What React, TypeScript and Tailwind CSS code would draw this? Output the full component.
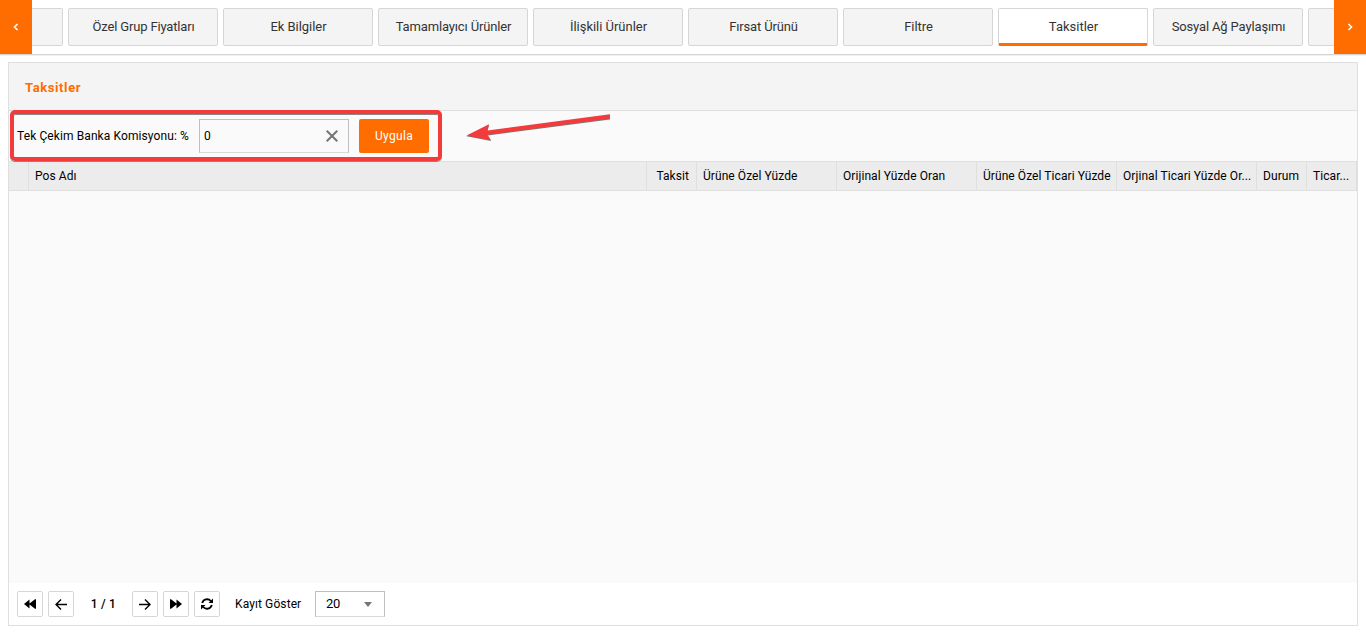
import type { ReactNode } from "react";

const tabs = [
  { label: "Özel Grup Fiyatları", spacing: "tracking-[-0.16px]" },
  { label: "Ek Bilgiler", spacing: "tracking-[-0.05px]" },
  { label: "Tamamlayıcı Ürünler", spacing: "tracking-[-0.14px]" },
  { label: "İlişkili Ürünler", spacing: "tracking-[-0.03px]" },
  { label: "Fırsat Ürünü", spacing: "tracking-[-0.15px]" },
  { label: "Filtre", spacing: "tracking-[-0.05px]" },
  { label: "Taksitler", active: true, spacing: "tracking-[0px]" },
  { label: "Sosyal Ağ Paylaşımı", spacing: "tracking-[-0.14px]" },
];

const columns = [
  { label: "", width: "w-5" },
  { label: "Pos Adı", width: "w-[618px]" },
  { label: "Taksit", width: "w-[50px]", align: "text-right pr-[7px]" },
  { label: "Ürüne Özel Yüzde", width: "w-[140px]" },
  { label: "Orijinal Yüzde Oran", width: "w-[140px]" },
  { label: "Ürüne Özel Ticari Yüzde", width: "w-[140px]" },
  { label: "Orjinal Ticari Yüzde Or...", width: "w-[140px]" },
  { label: "Durum", width: "w-[50px]" },
  { label: "Ticar...", width: "w-[50px]" },
];

function Tab({ label, active, spacing }: { label: string; active?: boolean; spacing: string }) {
  return (
    <button
      className={`h-[38px] w-[150px] shrink-0 rounded-[2px] border border-[#d6d6d6] pl-px text-[13px] text-[#333] ${spacing} ${
        active ? "border-b-[3px] border-b-[#ff6c00] bg-white pt-0.5" : "bg-[#f4f4f4]"
      }`}
    >
      {label}
    </button>
  );
}

function PageButton({ children, label }: { children: ReactNode; label: string }) {
  return (
    <button aria-label={label} className="flex size-[26px] items-center justify-center rounded-[2px] border border-[#d6d6d6] bg-white">
      {children}
    </button>
  );
}

function Chevron({ flip }: { flip?: boolean }) {
  return (
    <svg width="6" height="8" viewBox="0 0 6 8" className={flip ? "-scale-x-100" : ""}>
      <path d="M4.5 1 1.5 4l3 3" fill="none" stroke="white" strokeWidth="1.6" />
    </svg>
  );
}

function DoubleTriangle({ flip }: { flip?: boolean }) {
  return (
    <svg width="12" height="10" viewBox="0 0 12 10" className={flip ? "-scale-x-100" : ""}>
      <path d="M0 5 5.5 0.5V4.5L11 0.3H12V9.7H11L5.5 5.5V9.5Z" />
    </svg>
  );
}

function Arrow({ flip }: { flip?: boolean }) {
  return (
    <svg width="12" height="11" viewBox="0 0 12 11" className={flip ? "-scale-x-100" : ""}>
      <path d="M6 .5 1 5.500l5 5M1 5.500H12" fill="none" stroke="black" strokeWidth="1.400" />
    </svg>
  );
}

export default function App() {
  return (
    <div className="relative flex h-[634px] w-[1366px] flex-col overflow-hidden bg-white font-[Roboto,sans-serif] text-[12px] text-black">
      <nav className="flex h-[55px] shrink-0 border-b border-[#d4d4d4] shadow-[0_1px_0_#f2f2f2]">
        <button aria-label="Önceki" className="flex h-[54px] w-8 shrink-0 items-center justify-center bg-[#ff6c00]">
          <Chevron />
        </button>
        <div className="flex min-w-0 flex-1 gap-[5px] overflow-hidden pt-2">
          <div className="h-[38px] w-[31px] shrink-0 rounded-r-[2px] border border-l-0 border-[#d6d6d6] bg-[#f4f4f4]" />
          {tabs.map((tab) => (
            <Tab key={tab.label} {...tab} />
          ))}
          <div className="h-[38px] w-[150px] shrink-0 rounded-[2px] border border-[#d6d6d6] bg-[#f4f4f4]" />
        </div>
        <button aria-label="Sonraki" className="flex h-[54px] w-8 shrink-0 items-center justify-center bg-[#ff6c00]">
          <Chevron flip />
        </button>
      </nav>

      <main className="mx-2 mt-[7px] flex h-[564px] flex-col border border-[#dfdfdf] bg-[#fafafa]">
        <h1 className="flex h-12 shrink-0 items-center border-b border-[#dfdfdf] bg-[#f4f4f4] px-4 pt-0.5 text-[13px] font-bold tracking-[0.6px] text-[#ff6c00]">
          Taksitler
        </h1>
        <div className="flex h-[50px] shrink-0 items-center pl-2">
          <label className="w-[182px] tracking-[0.1px] whitespace-nowrap">Tek Çekim Banka Komisyonu: %</label>
          <div className="flex h-[34px] w-[150px] items-center justify-between border border-[#bfbfbf] border-b-[#d9d9d9] pr-[10px] pl-1">
            <span>0</span>
            <svg width="12" height="12" viewBox="0 0 12 12">
              <path d="m.7.7 10.600 10.600M11.300.7.7 11.300" stroke="#757575" strokeWidth="2" />
            </svg>
          </div>
          <button className="ml-[10px] h-[34px] w-[70px] rounded-[2px] bg-[#ff6c00] tracking-[0.3px] text-white">Uygula</button>
        </div>
        <div className="flex h-[30px] shrink-0 border-y border-[#dfdfdf] bg-[#ececec]">
          {columns.map((col) => (
            <div
              key={col.label}
              className={`${col.width} shrink-0 border-r border-[#dfdfdf] pl-[6px] leading-[28px] tracking-[0.07px] whitespace-nowrap ${col.align ?? ""}`}
            >
              {col.label}
            </div>
          ))}
        </div>
        <div className="flex-1" />
        <footer className="flex h-[42px] shrink-0 items-center gap-[5px] bg-white pl-2">
          <PageButton label="İlk sayfa"><DoubleTriangle /></PageButton>
          <PageButton label="Önceki sayfa"><Arrow /></PageButton>
          <span className="w-[48px] pl-px text-center font-medium tracking-[0.2px]">1 / 1</span>
          <PageButton label="Sonraki sayfa"><Arrow flip /></PageButton>
          <PageButton label="Son sayfa"><DoubleTriangle flip /></PageButton>
          <PageButton label="Yenile">
            <svg width="12" height="12" viewBox="0 0 12 12" fill="none" stroke="black" strokeWidth="1.800">
              <path d="M1.200 5A5 5 0 0 1 9.800 3M10.800 7A5 5 0 0 1 2.200 9" />
              <path d="M12 .5V5H7.500ZM0 11.500V7h4.500Z" fill="black" stroke="none" />
            </svg>
          </PageButton>
          <span className="ml-[10px] w-[75px] tracking-[0.1px]">Kayıt Göster</span>
          <div className="flex h-[26px] w-[70px] items-center justify-between border border-[#bfbfbf] border-b-[#d9d9d9] pr-3 pl-[10px]">
            <span className="text-[13px] tracking-[-0.3px]">20</span>
            <svg width="8" height="5" viewBox="0 0 8 5">
              <path d="M0 0H8L4 5Z" fill="#757575" />
            </svg>
          </div>
        </footer>
      </main>

      <div className="absolute top-[110px] left-[10px] h-[51px] w-[432px] rounded-[5px] border-4 border-[#f43b3b] shadow-[0_1px_0_#888,inset_0_1px_0_#888]" />
      <svg className="absolute top-[110px] left-[460px]" width="160" height="35" viewBox="0 0 160 35">
        <path d="M6.500 26.200 29 15 27.500 21.200 150 5.200V9.500L27.500 25.500 31 31Z" fill="#777" />
        <path d="M6.500 25.400 29 14.200 27.500 20.400 150 4.300V8.500L27.500 24.700 31 30.200Z" fill="#f43b3b" />
      </svg>
    </div>
  );
}
